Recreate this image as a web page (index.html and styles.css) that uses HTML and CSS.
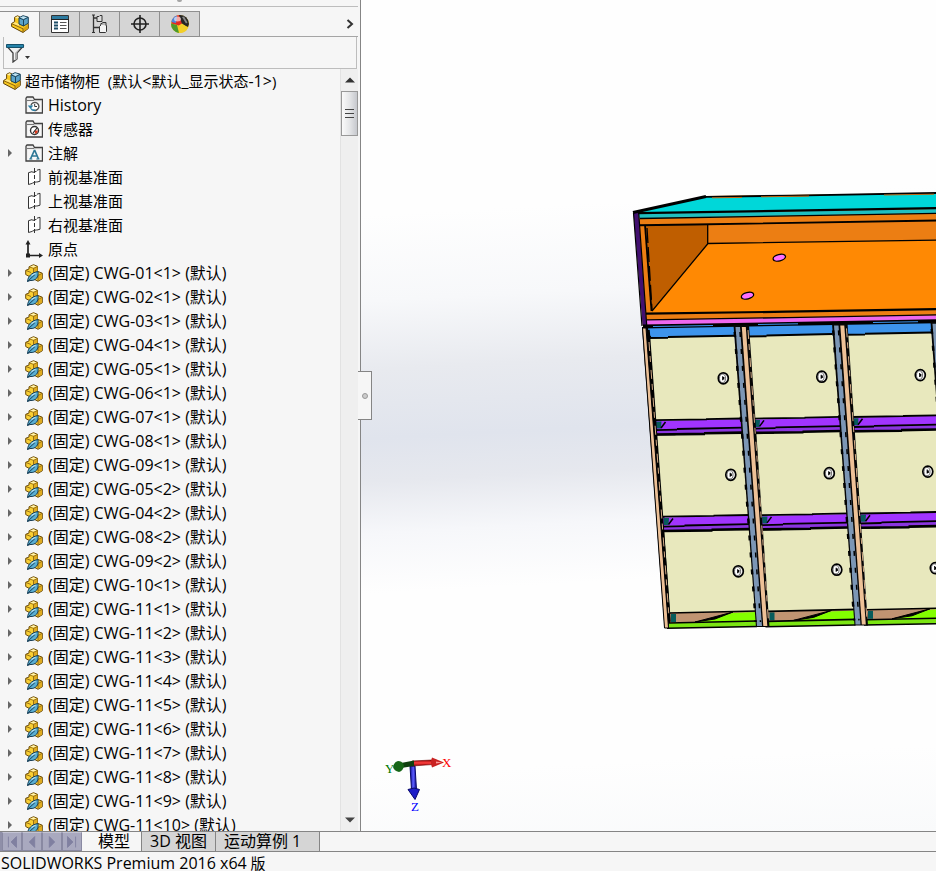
FILE: index.html
```html
<!DOCTYPE html>
<html lang="zh-CN">
<head>
<meta charset="utf-8">
<title>SOLIDWORKS Premium 2016 x64 版</title>
<link rel="stylesheet" href="styles.css">
</head>
<body>
<svg class="sprite" aria-hidden="true">
  <symbol id="assembly" viewBox="0 0 18 18">
    <path d="M.6 8.500l3-1.800V2.300L6.500.800 9 2v5l8.300 1.500v5L12 17.500.6 11.500z" fill="#f8c81f" stroke="#5f430c"/>
    <path d="M12 13.500l5-4v4L12 17z" fill="#d9a414"/>
    <path d="M1 8.800l11 5V17" fill="none" stroke="#8a6410"/>
    <path d="M1.500 8.500l2.500-1.300 4 1.800v1.800z" fill="#ffe682"/>
    <path d="M4 2.500L6.500 1.300 8 2v1L6 3.500z" fill="#fff0a8"/>
    <path d="M8 2.700l4-2 5.300 1.500v6L12.500 11 8 9z" fill="#5aa3ca" stroke="#1d4358"/>
    <path d="M9 2.800l3.200-1.500 4 1.100-3.700 1.900z" fill="#c0e2f0"/>
    <path d="M8 2.900l4.500 1.800 4.500-2.300M12.500 4.700V11" fill="none" stroke="#1d4358"/>
  </symbol>
  <symbol id="part" viewBox="0 0 18 18">
    <path d="M4 2.800L8.500.700l4 1.600v5l4.800 1.900v5.600L13 17.300.7 10.500V6.300L4 5z" fill="#f9cf33" stroke="#6b4c0e"/>
    <path d="M8.500 4.300l4-1.800V8l-4 2zM13 11.500l4-2v5l-4 2.300z" fill="#e0ac1f"/>
    <path d="M4 2.800l4.500 1.500 4-1.800M8.500 4.300V9M12.500 7.800L9 9.300l4 2.200 4-2.100M13 11.500V17M1 6.500l5 2" fill="none" stroke="#8d6815" stroke-width=".9"/>
    <path d="M5 2.700l3.500-1.500 3 1.200-3 1.200z" fill="#fff2ae"/>
    <path d="M2.500 17.500C3 12 6.500 8.800 13 7.500c.8 5.500-2 9.500-8 9z" fill="#5aafd2" stroke="#173f58"/>
    <path d="M2.500 17.500L10 10.500" stroke="#173f58"/>
    <path d="M6.500 11.500l4-2.300" stroke="#b9e2f0" stroke-width="1.200"/>
  </symbol>
  <symbol id="folder" viewBox="0 0 18 18">
    <path d="M1 17V2.200L2 1h6l1.500 2.500h8V17z" fill="#e9e9e9" stroke="#404040" stroke-width="1.300"/>
    <path d="M2 4.500h7" stroke="#777"/>
    <path d="M2.500 5.500h13.500v10.500H2.500z" fill="#f7f7f7"/>
  </symbol>
  <symbol id="history" viewBox="0 0 18 18">
    <use href="#folder"/>
    <path d="M6 9.500a4 4 0 1 1 2 4.500" fill="#fff" stroke="#555" stroke-width="1.400"/>
    <path d="M2.800 9.500h5.500L5.500 13z" fill="#2b7ea5"/>
    <path d="M6 12.500c1 2 3 2 4.500 1.500" fill="none" stroke="#2b7ea5" stroke-width="1.400"/>
    <path d="M9.700 8v2.500H12" fill="none" stroke="#333"/>
  </symbol>
  <symbol id="sensor" viewBox="0 0 18 18">
    <use href="#folder"/>
    <circle cx="9.500" cy="10.500" r="4" fill="#fff" stroke="#333" stroke-width="1.400"/>
    <path d="M9.500 10.500h3.300a3.300 3.300 0 0 1-2.800 3.300z" fill="#e03a1e"/>
    <path d="M8 13l4-5" stroke="#222" stroke-width="1.200"/>
  </symbol>
  <symbol id="note" viewBox="0 0 18 18">
    <use href="#folder"/>
    <path d="M5.500 15L9.300 6.500h.5L13.500 15M7 12h5" fill="none" stroke="#2d7795" stroke-width="1.700"/>
    <path d="M4.300 15h3M11.300 15h3.200" stroke="#2d7795"/>
  </symbol>
  <symbol id="plane" viewBox="0 0 18 18">
    <path d="M3.500 5L15.500 1.500v12L3.500 17z" fill="#fff" stroke="none"/>
    <path d="M7.500 3.500l-4 1.200V16.500l4-1.200M12 2.200l3-.900v11.900l-3.500 1" fill="none" stroke="#333"/>
    <path d="M9.500 0v5M9.500 7v4M9.500 13v4M7.500 4.500l4-1.200M7.500 15l4-1.200" fill="none" stroke="#333"/>
  </symbol>
  <symbol id="origin" viewBox="0 0 18 18">
    <path d="M3 3v12.500h12" fill="none" stroke="#222" stroke-width="1.700"/>
    <path d="M.5 4.500L3 0l2.500 4.500zM14 13l4 2.500-4 2.500zM1 13.500h4v4H1z" fill="#222"/>
  </symbol>
</svg>

<div class="app">
  <main class="workspace">
    <aside class="panel">
      <div class="grip"><span></span></div>
      <nav class="tabs">
        <button class="tab active" aria-label="FeatureManager"><svg class="icon"><use href="#assembly"/></svg></button>
        <button class="tab" aria-label="PropertyManager"><svg viewBox="0 0 20 20" class="tab-icon">
          <path d="M1.500 1.500h17v17h-17z" fill="#fff" stroke="#333"/><path d="M2 2h16v3H2z" fill="#2c7a9f"/>
          <path d="M1 5.500h18" stroke="#222"/>
          <path d="M4 8.500h4M4 11.500h4M4 14.500h4" stroke="#1d4d66" stroke-width="2"/>
          <path d="M10 8.500h6.500M10 11.500h6.500M10 14.500h6.500" stroke="#555"/></svg></button>
        <button class="tab" aria-label="ConfigurationManager"><svg viewBox="0 0 20 20" class="tab-icon">
          <path d="M3.500 1v18M3.500 4H8M3.500 13.500H10" fill="none" stroke="#333" stroke-width="1.300"/>
          <path d="M2 1h3M2 18.500h3" stroke="#333"/>
          <path d="M7 2.500h2l1-1h2v6H7z" fill="#ddd" stroke="#333"/>
          <path d="M9.500 12.500l2-2h4l1 1v6l-1 1h-6z" fill="#f4f4f4" stroke="#333"/><path d="M10 10.500l3-2h3v3" fill="#bbb" stroke="#333"/></svg></button>
        <button class="tab" aria-label="DimXpertManager"><svg viewBox="0 0 20 20" class="tab-icon">
          <circle cx="10" cy="10" r="6" fill="none" stroke="#222" stroke-width="1.600"/><path d="M10 1v18M1 10h18" stroke="#222" stroke-width="1.600"/></svg></button>
        <button class="tab" aria-label="DisplayManager"><svg viewBox="0 0 20 20" class="tab-icon">
          <circle cx="10" cy="10" r="9" fill="#f0c51d"/>
          <path d="M7 1.500l3-.5 3 8.500-4 2-7.500-2A9 9 0 0 1 7 1.500" fill="#e12b24"/>
          <path d="M1.200 8A9 9 0 0 1 7 1.500L6 9z" fill="#4d86dd"/>
          <path d="M9 1a9 9 0 0 1 10 9l-1 3-6-3z" fill="#262626"/>
          <path d="M9 11.500l3-2 6 4.500A9 9 0 0 1 7 18.500z" fill="#f3cf28"/>
          <path d="M1 9.500l6 1.500 2 8A9 9 0 0 1 1 9.500z" fill="#4c9a2b"/>
          <path d="M12 3l2-.5 3.500 6-1.500 1z" fill="#888"/>
          <ellipse cx="7.500" cy="5" rx="3.500" ry="2.500" fill="#fff" opacity=".6"/></svg></button>
        <button class="more" aria-label="更多"><svg viewBox="0 0 8 10"><path d="M1.500 1l4.500 4-4.500 4" fill="none" stroke="#333" stroke-width="2"/></svg></button>
      </nav>
      <div class="filter">
        <button class="funnel" aria-label="过滤器"><svg viewBox="0 0 26 20">
          <path d="M1 3.500h16l-6 6.500v6l-4 3v-9z" fill="#f1f1f1" stroke="#3d3d3d" stroke-width="1.300"/>
          <path d="M11 10v6l-2 1.500V10l5-5z" fill="#aaa"/>
          <path d="M.5 1.500h17v3H.5z" fill="#2583aa" stroke="#15516b"/>
          <path d="M19 13h5l-2.500 3z" fill="#333"/></svg></button>
        <input type="text" aria-label="过滤">
      </div>
      <div class="tree-area">
        <ul class="tree">
          <li class="root"><svg class="icon"><use href="#assembly"/></svg><span>超市储物柜&nbsp; (默认<b>&lt;</b>默认<b>_</b>显示状态<b>-1&gt;</b>)</span></li>
          <li><svg class="icon"><use href="#history"/></svg><b>History</b></li>
          <li><svg class="icon"><use href="#sensor"/></svg><span>传感器</span></li>
          <li class="parent"><svg class="icon"><use href="#note"/></svg><span>注解</span></li>
          <li><svg class="icon"><use href="#plane"/></svg><span>前视基准面</span></li>
          <li><svg class="icon"><use href="#plane"/></svg><span>上视基准面</span></li>
          <li><svg class="icon"><use href="#plane"/></svg><span>右视基准面</span></li>
          <li><svg class="icon"><use href="#origin"/></svg><span>原点</span></li>
          <li class="parent part"><svg class="icon"><use href="#part"/></svg><span>(固定) CWG-01&lt;1&gt; (默认)</span></li>
          <li class="parent part"><svg class="icon"><use href="#part"/></svg><span>(固定) CWG-02&lt;1&gt; (默认)</span></li>
          <li class="parent part"><svg class="icon"><use href="#part"/></svg><span>(固定) CWG-03&lt;1&gt; (默认)</span></li>
          <li class="parent part"><svg class="icon"><use href="#part"/></svg><span>(固定) CWG-04&lt;1&gt; (默认)</span></li>
          <li class="parent part"><svg class="icon"><use href="#part"/></svg><span>(固定) CWG-05&lt;1&gt; (默认)</span></li>
          <li class="parent part"><svg class="icon"><use href="#part"/></svg><span>(固定) CWG-06&lt;1&gt; (默认)</span></li>
          <li class="parent part"><svg class="icon"><use href="#part"/></svg><span>(固定) CWG-07&lt;1&gt; (默认)</span></li>
          <li class="parent part"><svg class="icon"><use href="#part"/></svg><span>(固定) CWG-08&lt;1&gt; (默认)</span></li>
          <li class="parent part"><svg class="icon"><use href="#part"/></svg><span>(固定) CWG-09&lt;1&gt; (默认)</span></li>
          <li class="parent part"><svg class="icon"><use href="#part"/></svg><span>(固定) CWG-05&lt;2&gt; (默认)</span></li>
          <li class="parent part"><svg class="icon"><use href="#part"/></svg><span>(固定) CWG-04&lt;2&gt; (默认)</span></li>
          <li class="parent part"><svg class="icon"><use href="#part"/></svg><span>(固定) CWG-08&lt;2&gt; (默认)</span></li>
          <li class="parent part"><svg class="icon"><use href="#part"/></svg><span>(固定) CWG-09&lt;2&gt; (默认)</span></li>
          <li class="parent part"><svg class="icon"><use href="#part"/></svg><span>(固定) CWG-10&lt;1&gt; (默认)</span></li>
          <li class="parent part"><svg class="icon"><use href="#part"/></svg><span>(固定) CWG-11&lt;1&gt; (默认)</span></li>
          <li class="parent part"><svg class="icon"><use href="#part"/></svg><span>(固定) CWG-11&lt;2&gt; (默认)</span></li>
          <li class="parent part"><svg class="icon"><use href="#part"/></svg><span>(固定) CWG-11&lt;3&gt; (默认)</span></li>
          <li class="parent part"><svg class="icon"><use href="#part"/></svg><span>(固定) CWG-11&lt;4&gt; (默认)</span></li>
          <li class="parent part"><svg class="icon"><use href="#part"/></svg><span>(固定) CWG-11&lt;5&gt; (默认)</span></li>
          <li class="parent part"><svg class="icon"><use href="#part"/></svg><span>(固定) CWG-11&lt;6&gt; (默认)</span></li>
          <li class="parent part"><svg class="icon"><use href="#part"/></svg><span>(固定) CWG-11&lt;7&gt; (默认)</span></li>
          <li class="parent part"><svg class="icon"><use href="#part"/></svg><span>(固定) CWG-11&lt;8&gt; (默认)</span></li>
          <li class="parent part"><svg class="icon"><use href="#part"/></svg><span>(固定) CWG-11&lt;9&gt; (默认)</span></li>
          <li class="parent part"><svg class="icon"><use href="#part"/></svg><span>(固定) CWG-11&lt;10&gt; (默认)</span></li>
        </ul>
        <div class="scrollbar">
          <button aria-label="向上滚动"><svg viewBox="0 0 10 6"><path d="M0 5.500L5 .5l5 5z" fill="#333"/></svg></button>
          <div class="thumb"><i></i><i></i><i></i></div>
          <button class="down" aria-label="向下滚动"><svg viewBox="0 0 10 6"><path d="M0 .5h10L5 5.500z" fill="#444"/></svg></button>
        </div>
      </div>
      <button class="collapse" aria-label="折叠面板"><span></span></button>
    </aside>

    <section class="viewport" aria-label="模型视图">
      <svg class="scene" viewBox="361 0 575 831" preserveAspectRatio="xMinYMin slice">
        <defs>
          <g id="lock">
            <ellipse rx="5" ry="5.500" fill="#f4f4f4" stroke="#000" stroke-width="1.700"/>
            <ellipse cx="-.8" rx="3" ry="4.200" fill="#fff" stroke="#444" stroke-width=".8"/>
            <path d="M-.6-2v4M.5-1.200v2.500" stroke="#000" stroke-width="1.100"/>
          </g>
          <g id="door">
            <path d="M649 337.500l85-1.500 8 82-87 2z" fill="#e8e8bd"/>
            <path d="M648 338l20-.2M668 337l66-1.300" stroke="#000" stroke-width="2"/>
            <use href="#lock" x="723.300" y="378.300"/>
          </g>
          <g id="shelf">
            <path d="M655 421l87-2v8.500l-87 2z" fill="#a134ff"/>
            <path d="M655 429.500l87-2v5l-87 2z" fill="#8b35df"/>
            <path d="M656 421.500h5.500l-.5 7h-4.500z" fill="#075c5c"/>
            <path d="M661 428l4.500-6" stroke="#000" stroke-width="1.500"/>
            <path d="M655 420.200l52-.8M706 419.200l36-.7M655 430.200l22-.5M677 429l65-1.300" stroke="#000" stroke-width="1.800"/>
            <path d="M655 434.500l50-.6M704 433.300l38-.7" stroke="#000" stroke-width="2.600"/>
          </g>
          <g id="foot">
            <path d="M670 613l86-2v10l-86 2z" fill="#c09472"/>
            <path d="M697 622.500l35-9.500 25-1v9.500z" fill="#83ff00"/>
            <path d="M669 623l88-2v5.500l-88 2z" fill="#7be512"/>
            <path d="M671 614h5v8h-5z" fill="#075c5c"/>
            <path d="M669 613l88-2M669 623l88-2" stroke="#000" stroke-width="1.600"/>
            <path d="M695 622l38-10-18 7z" fill="#000" stroke="#000"/>
            <path d="M667 628.300l90-1.800" stroke="#000" stroke-width="1.500"/>
          </g>
          <g id="divider">
            <path d="M733.500 325H749l20.500 302H756z" fill="#050505"/>
            <path d="M735.500 327h4.500l22 299h-5z" fill="#7c96b5"/>
            <path d="M741.800 327h4l21.500 299h-4z" fill="#edc197"/>
            <path d="M748 330l20.500 292" stroke="#edc197" stroke-width=".9" stroke-dasharray="9 5 6 8"/>
            <path d="M740 332l20.500 290" stroke="#000" stroke-width="1.500" stroke-dasharray="5 12"/>
            <path d="M734.700 332l21 290" stroke="#000" stroke-width="2.400" stroke-dasharray="5 12"/>
          </g>
          <g id="row"><use href="#door"/><use href="#door" x="98.500" y="-1.600"/><use href="#door" x="197" y="-3.200"/></g>
          <g id="shelves"><use href="#shelf"/><use href="#shelf" x="98.500" y="-1.600"/><use href="#shelf" x="197" y="-3.200"/></g>
          <linearGradient id="red" x1="0" y1="0" x2="0" y2="1"><stop stop-color="#8c0000"/><stop offset=".5" stop-color="#ff4040"/><stop offset="1" stop-color="#8c0000"/></linearGradient>
          <linearGradient id="blue"><stop stop-color="#0a0a8c"/><stop offset=".5" stop-color="#5c5cff"/><stop offset="1" stop-color="#0a0a8c"/></linearGradient>
        </defs>

        <g class="cabinet">
          <path d="M634 212l72-16 300-4v135H643z" fill="#ff8903"/>
          <path d="M634 212l73-15.500L1006 192v15l-368 6.500z" fill="#00d7d9"/>
          <path d="M638 213.500l368-5.500v6L639 218.500z" fill="#20bfc0"/>
          <path d="M638 218.500l368-6.500v9L639 225z" fill="#ec7e13"/>
          <path d="M707 224l299-5v20l-298 4z" fill="#ec7e13"/>
          <path d="M644 225l64-1v19l-57 68z" fill="#bf5e00"/>
          <path d="M639 225h6l7 87h-6z" fill="#ec7e13"/>
          <path d="M646 314l360-6v6l-360 6z" fill="#ec7e13"/>
          <path d="M646 320l360-6v6l-360 5.500z" fill="#ee68ee"/>
          <path d="M633.500 213h5l8 112h-4z" fill="#421070"/>
          <g fill="none" stroke="#000" stroke-width="1.300">
            <path d="M638 213.200l368-6.200" stroke-width="2.300"/>
            <path d="M633 212.500l73-16" stroke-width="3"/>
            <path d="M706 196.800l86-1.200 144-2.600h70" stroke-width="1.800"/>
            <path d="M640 218.500l368-6.300"/>
            <path d="M639 225.300l55-.8 312-5.200" stroke-width="1.900"/>
            <path d="M707.700 225v18.500l298-4.500M708 243.500L652 311"/>
            <path d="M645 225l6.500 86" stroke-width="1.800"/>
            <path d="M647 228l5 82" stroke-dasharray="15 4"/>
            <path d="M646 313.700l140-2 220-3.700" stroke-width="2.200"/>
            <path d="M647 319.800l140-2.200 219-4"/>
            <path d="M633.500 213l8.500 113M638.700 213l8 112" stroke-width="1.200"/>
            <ellipse cx="779.300" cy="257.700" rx="6.300" ry="3.200" transform="rotate(-14 779.300 257.700)" fill="#ff70ff"/>
            <ellipse cx="747.500" cy="295.700" rx="6.300" ry="3.200" transform="rotate(-14 747.500 295.700)" fill="#ff70ff"/>
          </g>
          <path d="M712 197.800l30-.4M761 196.800l48-.7M884 195l50-.8" stroke="#c76712"/>

          <path d="M643 326l363-6.500V333l-360 6z" fill="#3d94ec"/>
          <path d="M643 326.500l363-6.500" stroke="#000" stroke-width="3.800"/>
          <path d="M653 326.500l60-1M758 324.500l40-.7M873 322.500l45-.8" stroke="#3d94ec"/>
          <path d="M642 327h6l22.500 301h-6z" fill="#000"/>
          <path d="M649 336l21 280" stroke="#000" stroke-width="4"/>
          <use href="#row"/><use href="#row" x="7.500" y="96.500"/><use href="#row" x="15" y="193"/>
          <use href="#shelves"/><use href="#shelves" x="7.500" y="96.500"/>
          <use href="#foot"/><use href="#foot" x="98.500" y="-1.600"/><use href="#foot" x="197" y="-3.200"/>
          <path d="M648 330l21 292" stroke="#000" stroke-width="3.500"/>
          <path d="M642.500 328h3.500l22.500 300h-4z" fill="#edc197" stroke="#000"/>
          <path d="M649 342l20 275" stroke="#edc197" stroke-width=".9" stroke-dasharray="9 5 6 8"/>
          <use href="#divider"/><use href="#divider" x="98.500" y="-1.600"/><use href="#divider" x="197" y="-3.200"/>
        </g>

        <g class="triad">
          <path d="M410 766h5l1.500 24h-5z" fill="url(#blue)" stroke="#05056a"/>
          <path d="M408 789.500l6-1.500 5.500 1.500-4.500 10z" fill="#1d1dc8" stroke="#08086a"/>
          <path d="M412 761l24-1.200v4.500L412 766z" fill="url(#red)" stroke="#6b0000" stroke-width=".6"/>
          <path d="M432 757.500l12 5-12 5q-2-5 0-10z" fill="#c92222"/>
          <path d="M436 761.500l6 1-6 1z" fill="#ff9a9a"/>
          <path d="M401 763l13-2.500v5.500l-13 2z" fill="#10400f"/>
          <path d="M393 767q1-5 5-6 5 0 6 5-1 5-5 6-5-1-6-5z" fill="#176617"/>
          <text x="385" y="773" fill="#007800">Y</text>
          <text x="442" y="767" fill="#f00">X</text>
          <text x="411" y="811" fill="#00f">Z</text>
        </g>
      </svg>
    </section>
  </main>

  <nav class="sheet-bar">
    <div class="sheet-nav">
      <button aria-label="第一个"><svg viewBox="0 0 20 20"><path d="M6 4v12M15 4l-6 6 6 6z"/></svg></button>
      <button aria-label="上一个"><svg viewBox="0 0 20 20"><path d="M13 4l-6 6 6 6z"/></svg></button>
      <button aria-label="下一个"><svg viewBox="0 0 20 20"><path d="M7 4l6 6-6 6z"/></svg></button>
      <button aria-label="最后一个"><svg viewBox="0 0 20 20"><path d="M5 4l6 6-6 6zM14 4v12"/></svg></button>
    </div>
    <button class="sheet current">模型</button>
    <button class="sheet">3D 视图</button>
    <button class="sheet wide">运动算例 1</button>
  </nav>
  <footer class="status"><b>SOLIDWORKS Premium 2016 x64</b> 版</footer>
</div>
</body>
</html>
```
FILE: styles.css
```css
* { box-sizing: border-box; }

body {
  margin: 0;
  background: #f6f6f6;
  color: #000;
  font: 15px/20px "Open Sans", "Noto Sans CJK SC", sans-serif;
}

button {
  display: flex;
  align-items: center;
  justify-content: center;
  margin: 0;
  padding: 0;
  border: 0;
  background: none;
  color: inherit;
  font: inherit;
}

ul { margin: 0; padding: 0; list-style: none; }

/* Latin runs are set one size above the Chinese text */
b { font-size: 16px; font-weight: 400; }

.sprite { position: absolute; width: 0; height: 0; }

.icon { flex: none; width: 18px; height: 18px; }

.app { display: flex; flex-direction: column; height: 100vh; }

.workspace { display: flex; flex: 1; min-height: 0; }

.panel {
  position: relative;
  z-index: 1;
  display: flex;
  flex: none;
  flex-direction: column;
  width: 361px;
  padding-right: 2px;
  border-right: 1px solid #858585;
}

.grip {
  display: flex;
  justify-content: center;
  height: 7px;
  border-bottom: 1px solid #bdbdbd;
}

.grip span {
  width: 5px;
  height: 2px;
  border-radius: 0 0 3px 3px;
  background: #a5a5a5;
}

/* manager tabs */
.tabs {
  display: flex;
  height: 30px;
  padding-top: 4px;
  border-bottom: 1px solid #a5a5a5;
}

.tab {
  width: 40px;
  height: 26px;
  border: 1px solid #8f8f8f;
  border-left: 0;
  background: #d5d5d5;
}

.tab.active { border-bottom-color: #f6f6f6; background: #f6f6f6; }

.tab-icon { width: 20px; height: 20px; }

.more { width: 16px; margin-left: auto; }
.more svg { width: 8px; height: 10px; }

.filter {
  display: flex;
  height: 32px;
  margin: 0 1px 0 3px;
  border: 1px solid #bdbdbd;
  border-top: 0;
}

.funnel { width: 30px; }
.funnel svg { width: 26px; height: 20px; }

.filter input {
  flex: 1;
  min-width: 0;
  border: 0;
  outline: 0;
  background: none;
  font: inherit;
}

/* feature tree */
.tree-area { display: flex; flex: 1; min-height: 0; }

.tree { flex: 1; min-width: 0; overflow: hidden; }

.tree li {
  display: flex;
  align-items: center;
  gap: 5px;
  height: 24px;
  padding-left: 25px;
  white-space: nowrap;
}

.tree .root { gap: 4px; padding-left: 3px; }

.tree .parent { padding-left: 8px; }

.tree .part { font-size: 16px; }

.tree .parent::before {
  width: 12px;
  height: 8px;
  background: #666;
  clip-path: polygon(0 0, 4px 4px, 0 8px);
  content: "";
}

.scrollbar {
  display: flex;
  flex-direction: column;
  width: 18px;
  border-left: 1px solid #e2e2e2;
  background: #efefef;
}

.scrollbar button { height: 22px; }
.scrollbar svg { width: 10px; height: 6px; }
.scrollbar .down { margin-top: auto; }

.thumb {
  display: flex;
  flex-direction: column;
  align-items: center;
  justify-content: center;
  gap: 3px;
  height: 45px;
  border: 1px solid #999;
  background: linear-gradient(90deg, #fafafa, #e5e6e8 50%, #c6c8cd);
}

.thumb i { width: 9px; height: 1px; background: #444; }

.collapse {
  position: absolute;
  top: 371px;
  right: -12px;
  width: 14px;
  height: 49px;
  border: 1px solid #858585;
  border-left: 0;
  background: #f6f6f6;
}

.collapse span {
  width: 6px;
  height: 6px;
  border: 1px solid #999;
  border-radius: 50%;
  background: #ccc;
}

.viewport {
  flex: 1;
  min-width: 0;
  overflow: hidden;
  background: linear-gradient(177deg, #fefefe 25%, #f7f8fa 35%, #e8eaef 43%, #e0e4ed 51%, #e6e8ee 56%, #f6f7fa 62%, #fefefe 69%, #fefefe 90%, #f9fafb);
}

.scene { display: block; width: 100%; height: 100%; }

.triad text { font: 13px "Liberation Serif", serif; }

/* document tabs */
.sheet-bar {
  display: flex;
  height: 21px;
  border-top: 1px solid #858585;
  border-bottom: 1px solid #858585;
  font-size: 16px;
  line-height: 19px;
}

.sheet-nav { display: flex; padding-left: 2px; background: #8f8fa8; }

.sheet-nav button {
  width: 20px;
  border: 1px solid #8989a2;
  border-top-color: #c3c3d3;
  background: #a9a9bf;
}

.sheet-nav svg { width: 18px; height: 18px; fill: #8080a0; stroke: #8080a0; }

.sheet {
  padding: 0 8px;
  border-right: 1px solid #858585;
  background: #d5d5d5;
}

.sheet.current { padding: 0 11px 0 16px; background: #f6f6f6; }
.sheet.wide { padding-right: 18px; }

.status {
  height: 19px;
  padding: 3px 0 0 1px;
  line-height: 16px;
  white-space: nowrap;
}
```
